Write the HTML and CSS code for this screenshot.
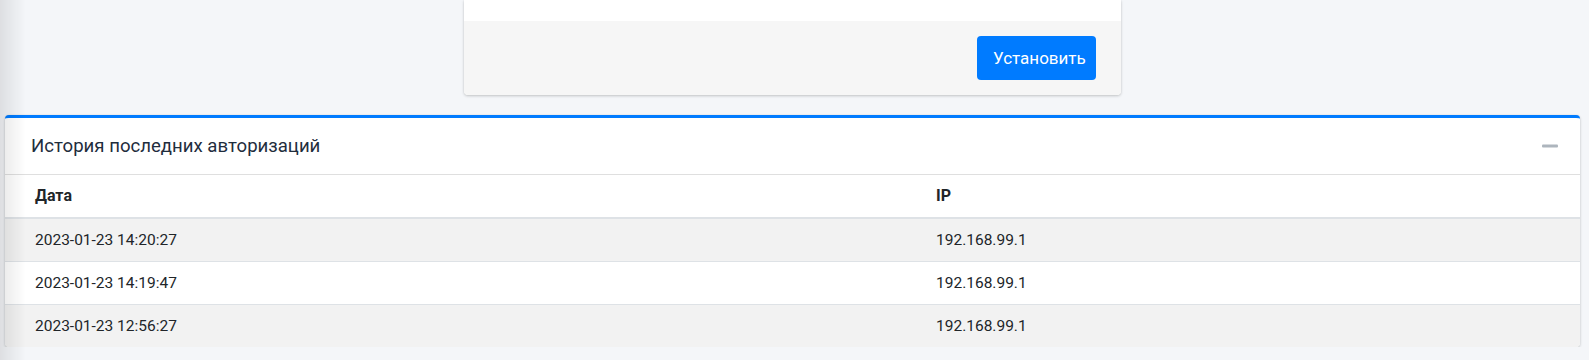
FILE: index.html
```html
<!DOCTYPE html>
<html lang="ru">
<head>
    <meta charset="UTF-8">
    <meta name="viewport" content="width=device-width, initial-scale=1.0">
    <title>Профиль</title>
    <link rel="stylesheet" href="styles.css">
</head>
<body>

    <!-- тень от боковой панели -->
    <div class="sidebar-shade"></div>

    <div class="content">
        <div class="row-center">
            <div class="card card-small">
                <div class="card-body"></div>
                <div class="card-footer">
                    <button class="btn-primary">Установить</button>
                </div>
            </div>
        </div>

        <div class="card card-primary">
            <div class="card-header">
                <h3 class="card-title">История последних авторизаций</h3>
                <button class="btn-tool" title="Свернуть">
                    <svg width="16" height="4" viewBox="0 0 16 4"><rect x="0" y="0.5" width="16" height="3" rx="1" fill="#adb5bd"/></svg>
                </button>
            </div>
            <table class="table">
                <thead>
                    <tr>
                        <th class="col-date">Дата</th>
                        <th>IP</th>
                    </tr>
                </thead>
                <tbody>
                    <tr>
                        <td>2023-01-23 14:20:27</td>
                        <td>192.168.99.1</td>
                    </tr>
                    <tr>
                        <td>2023-01-23 14:19:47</td>
                        <td>192.168.99.1</td>
                    </tr>
                    <tr>
                        <td>2023-01-23 12:56:27</td>
                        <td>192.168.99.1</td>
                    </tr>
                </tbody>
            </table>
        </div>
    </div>

</body>
</html>
```

FILE: styles.css
```css
body {
    font-family: 'Roboto', 'Liberation Sans', sans-serif;
    background: #f4f6f9;
    margin: 0;
    color: #212529;
    overflow: hidden;
}
.sidebar-shade {
    position: fixed;
    top: 0;
    left: 0;
    bottom: 0;
    width: 26px;
    background: linear-gradient(to right, rgba(0, 0, 0, 0.09), rgba(0, 0, 0, 0));
    pointer-events: none;
    z-index: 10;
}
.content {
    padding: 0 9px 0 5px;
}
.row-center {
    display: flex;
    justify-content: center;
    margin-bottom: 20px;
}
.card {
    background: #fff;
    border-radius: 4px;
    box-shadow: 0 0 1px rgba(0, 0, 0, 0.125), 0 1px 3px rgba(0, 0, 0, 0.2);
    overflow: hidden;
}
.card-small {
    width: 657px;
    border-radius: 0 0 4px 4px;
}
.card-body {
    height: 21px;
}
.card-footer {
    background: #f6f6f6;
    display: flex;
    justify-content: flex-end;
    padding: 15px 25px;
}
.btn-primary {
    font-family: inherit;
    background: #007bff;
    color: #fff;
    border: none;
    border-radius: 4px;
    font-size: 17px;
    height: 44px;
    padding: 0 16px;
    width: 119px;
    cursor: pointer;
}

/* Карточка с историей */
.card-primary {
    border-top: 3px solid #007bff;
}
.card-header {
    display: flex;
    align-items: center;
    justify-content: space-between;
    height: 56px;
    padding: 0 22px 0 26px;
    border-bottom: 1px solid #dfdfdf;
}
.card-title {
    margin: 0;
    font-size: 18.6px;
    font-weight: 400;
    color: #1f2d3d;
}
.btn-tool {
    background: none;
    border: none;
    padding: 0;
    display: flex;
    cursor: pointer;
}
.table {
    width: 100%;
    border-collapse: separate;
    border-spacing: 0;
    font-size: 15.5px;
}
.table th,
.table td {
    text-align: left;
    padding: 0 30px;
    line-height: 24px;
}
.table th {
    font-size: 16px;
    font-weight: 700;
    height: 42px;
    border-bottom: 2px solid #dee2e6;
}
.table td {
    height: 42px;
    border-bottom: 1px solid #dee2e6;
}
.table tbody tr:last-child td {
    border-bottom: none;
}
.col-date {
    width: 841px;
}
.table tbody tr:nth-child(odd) {
    background: #f2f2f2;
}
```
